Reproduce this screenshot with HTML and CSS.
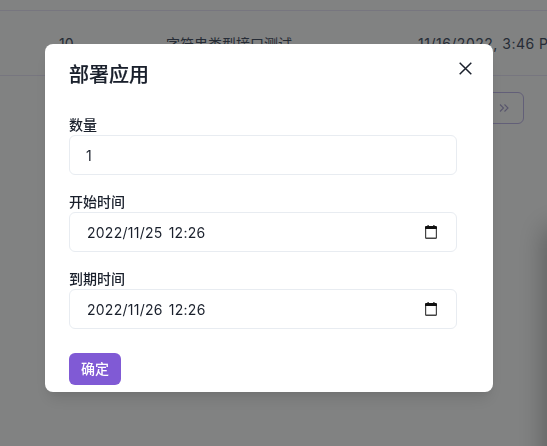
FILE: index.html
```html
<!DOCTYPE html>
<html lang="zh-CN">
<head>
<meta charset="utf-8">
<title>部署应用</title>
<link rel="stylesheet" href="styles.css">
</head>
<body>
<main class="page">
  <div class="row row-first">
    <span class="cell cell-id">10</span>
    <span class="cell cell-name">字符串类型接口测试</span>
    <span class="cell cell-date">11/16/2022, 3:46 PM</span>
  </div>
  <div class="pager">
    <button class="pager-btn" type="button" aria-label="最后一页">
      <svg width="10" height="10" viewBox="0 0 10 10" fill="none" stroke="currentColor" stroke-width="1.1"><path d="M1 1.500 4.500 5 1 8.500M5.500 1.500 9 5 5.500 8.500"/></svg>
    </button>
  </div>
</main>
<div class="edge-shade"></div>
<div class="overlay">
  <section class="modal" role="dialog" aria-label="部署应用">
    <header class="modal-header">
      <h2 class="modal-title">部署应用</h2>
      <button class="close" type="button" aria-label="关闭">
        <svg width="13" height="13" viewBox="0 0 13 13" fill="none" stroke="currentColor" stroke-width="1.5"><path d="M.7.7l11.600 11.600M12.300.7.7 12.300"/></svg>
      </button>
    </header>
    <form class="modal-body">
      <div class="field">
        <label class="label" for="count">数量</label>
        <div class="control"><input class="input" id="count" type="text" value="1"></div>
      </div>
      <div class="field">
        <label class="label" for="start">开始时间</label>
        <div class="control control-date">
          <input class="input" id="start" type="text" value="2022/11/25 12:26">
          <svg class="cal" width="12" height="14" viewBox="0 0 12 14"><path fill="#111" d="M2.500 0h1.200v1h4.600V0h1.200v1h1.300c.7 0 1.200.5 1.200 1.200V4H0V2.200C0 1.500.5 1 1.200 1h1.300V0z"/><path fill="#444" d="M0 4h1.200v8.600h9.600V4H12v8.800c0 .7-.5 1.200-1.200 1.200H1.200C.5 14 0 13.500 0 12.800V4z"/></svg>
        </div>
      </div>
      <div class="field">
        <label class="label" for="end">到期时间</label>
        <div class="control control-date">
          <input class="input" id="end" type="text" value="2022/11/26 12:26">
          <svg class="cal" width="12" height="14" viewBox="0 0 12 14"><path fill="#111" d="M2.500 0h1.200v1h4.600V0h1.200v1h1.300c.7 0 1.200.5 1.200 1.200V4H0V2.200C0 1.500.5 1 1.200 1h1.300V0z"/><path fill="#444" d="M0 4h1.200v8.600h9.600V4H12v8.800c0 .7-.5 1.200-1.200 1.200H1.200C.5 14 0 13.500 0 12.800V4z"/></svg>
        </div>
      </div>
      <button class="submit" type="button">确定</button>
    </form>
  </section>
</div>
</body>
</html>
```
FILE: styles.css
```css
* { box-sizing: border-box; }
html, body { height: 100%; }
body {
  margin: 0;
  overflow: hidden;
  background: #f7f9f9;
  color: #1a202c;
  font-family: Inter, "Noto Sans CJK SC", sans-serif;
}
.page { padding-top: 10px; }
.row {
  display: flex;
  align-items: center;
  height: 66px;
  border-top: 1px solid #e4e2f4;
  border-bottom: 1px solid #e4e2f4;
  color: #4a5568;
  font-size: 14px;
  white-space: nowrap;
}
.cell { flex: none; }
.cell-id { width: 166px; padding-left: 59px; }
.cell-name { width: 252px; }
.cell-date { letter-spacing: .5px; }
.pager {
  display: flex;
  justify-content: flex-end;
  padding: 16px 23px 0 0;
}
.pager-btn {
  display: flex;
  align-items: center;
  justify-content: flex-end;
  width: 60px;
  height: 32px;
  padding: 0 14px 0 0;
  background: transparent;
  border: 1px solid #bdb6e6;
  border-radius: 6px;
  color: #a9a4d0;
}
.edge-shade {
  position: fixed;
  top: 230px;
  right: -30px;
  bottom: -60px;
  width: 30px;
  box-shadow: 0 0 28px 2px rgba(0, 0, 0, .3);
}
.overlay {
  position: fixed;
  inset: 0;
  display: flex;
  justify-content: center;
  align-items: flex-start;
  padding: 44px 9px 0 0;
  background: rgba(0, 0, 0, .48);
}
.modal {
  position: relative;
  width: 448px;
  height: 348px;
  background: #fff;
  border-radius: 8px;
  box-shadow: 0 10px 15px -3px rgba(0,0,0,.1), 0 4px 6px -2px rgba(0,0,0,.05);
}
.modal-header { padding: 16px 24px; }
.modal-title {
  margin: 0;
  font-size: 20px;
  line-height: 30px;
  font-weight: 500;
  -webkit-text-stroke: .2px #1a202c;
}
.close {
  position: absolute;
  top: 8px;
  right: 12px;
  display: flex;
  align-items: center;
  justify-content: center;
  width: 32px;
  height: 32px;
  padding: 0;
  background: none;
  border: 0;
  color: #1a202c;
}
.modal-body { padding: 8px 36px 0 24px; }
.field { margin-bottom: 16px; }
.label {
  display: block;
  font-size: 14px;
  line-height: 21px;
  font-weight: 500;
}
.control {
  display: flex;
  align-items: center;
  height: 40px;
  padding: 0 16px;
  background: #fff;
  border: 1px solid #e8ecf1;
  border-radius: 6px;
}
.input {
  flex: 1;
  min-width: 0;
  padding: 0;
  border: 0;
  outline: 0;
  background: transparent;
  color: #1a202c;
  font: 400 14px Inter, "Noto Sans CJK SC", sans-serif;
  letter-spacing: .25px;
  word-spacing: 2px;
}
.control-date .input { padding-left: 1px; }
.cal { flex: none; margin-right: 3px; margin-top: -1px; }
.submit {
  display: block;
  width: 52px;
  height: 32px;
  margin-top: 24px;
  padding: 0 0 2px;
  background: #805ad5;
  border: 0;
  border-radius: 6px;
  color: #fff;
  font: 500 14px Inter, "Noto Sans CJK SC", sans-serif;
}
```
